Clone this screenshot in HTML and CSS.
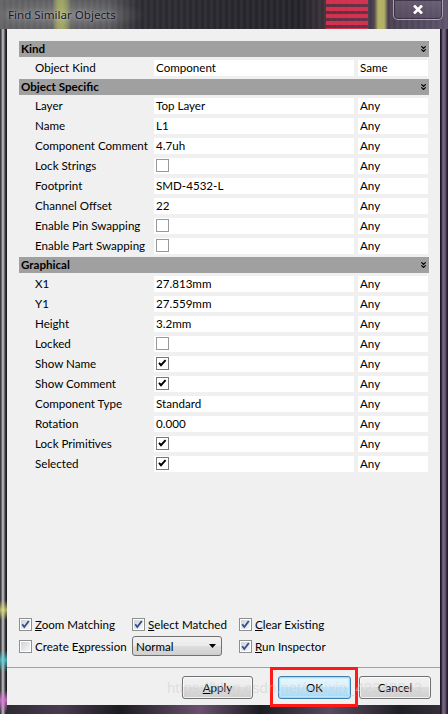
FILE: index.html
```html
<!DOCTYPE html>
<html>
<head>
<meta charset="utf-8">
<title>Find Similar Objects</title>
<link rel="stylesheet" href="styles.css">
</head>
<body>
<svg class="defs" width="0" height="0" aria-hidden="true">
  <defs>
    <linearGradient id="cbfill" x1="0" y1="0" x2="1" y2="1">
      <stop offset="0" stop-color="#cfd3d8"/>
      <stop offset="1" stop-color="#f7f7f7"/>
    </linearGradient>
  </defs>
</svg>
<div class="window">
  <div class="titlebar">
    <span class="title">Find Similar Objects</span>
    <div class="close">
      <svg width="10" height="9" viewBox="0 0 10 9"><path d="M1 0.5 L9 8.5 M9 0.5 L1 8.5" stroke="#fff" stroke-width="2.6" fill="none"/></svg>
    </div>
  </div>
  <div class="client">
    <div class="grid">
      <div class="hdr"><span>Kind</span><svg class="chev" width="5" height="6" viewBox="0 0 5 6"><path d="M0.3 0.3 L2.5 2.5 L4.7 0.3 M0.3 3.3 L2.5 5.5 L4.7 3.3" stroke="#000" stroke-width="1.2" fill="none"/></svg></div>
      <div class="row"><span class="lbl">Object Kind</span><span class="val">Component</span><span class="mode">Same</span></div>

      <div class="hdr"><span>Object Specific</span><svg class="chev" width="5" height="6" viewBox="0 0 5 6"><path d="M0.3 0.3 L2.5 2.5 L4.7 0.3 M0.3 3.3 L2.5 5.5 L4.7 3.3" stroke="#000" stroke-width="1.2" fill="none"/></svg></div>
      <div class="row"><span class="lbl">Layer</span><span class="val">Top Layer</span><span class="mode">Any</span></div>
      <div class="row"><span class="lbl">Name</span><span class="val">L1</span><span class="mode">Any</span></div>
      <div class="row"><span class="lbl">Component Comment</span><span class="val">4.7uh</span><span class="mode">Any</span></div>
      <div class="row"><span class="lbl">Lock Strings</span><span class="val"><svg class="cb" viewBox="0 0 13 13"><rect x="0.5" y="0.5" width="12" height="12" fill="#fff" stroke="#999"/></svg></span><span class="mode">Any</span></div>
      <div class="row"><span class="lbl">Footprint</span><span class="val">SMD-4532-L</span><span class="mode">Any</span></div>
      <div class="row"><span class="lbl">Channel Offset</span><span class="val">22</span><span class="mode">Any</span></div>
      <div class="row"><span class="lbl">Enable Pin Swapping</span><span class="val"><svg class="cb" viewBox="0 0 13 13"><rect x="0.5" y="0.5" width="12" height="12" fill="#fff" stroke="#999"/></svg></span><span class="mode">Any</span></div>
      <div class="row"><span class="lbl">Enable Part Swapping</span><span class="val"><svg class="cb" viewBox="0 0 13 13"><rect x="0.5" y="0.5" width="12" height="12" fill="#fff" stroke="#999"/></svg></span><span class="mode">Any</span></div>

      <div class="hdr"><span>Graphical</span><svg class="chev" width="5" height="6" viewBox="0 0 5 6"><path d="M0.3 0.3 L2.5 2.5 L4.7 0.3 M0.3 3.3 L2.5 5.5 L4.7 3.3" stroke="#000" stroke-width="1.2" fill="none"/></svg></div>
      <div class="row"><span class="lbl">X1</span><span class="val">27.813mm</span><span class="mode">Any</span></div>
      <div class="row"><span class="lbl">Y1</span><span class="val">27.559mm</span><span class="mode">Any</span></div>
      <div class="row"><span class="lbl">Height</span><span class="val">3.2mm</span><span class="mode">Any</span></div>
      <div class="row"><span class="lbl">Locked</span><span class="val"><svg class="cb" viewBox="0 0 13 13"><rect x="0.5" y="0.5" width="12" height="12" fill="#fff" stroke="#999"/></svg></span><span class="mode">Any</span></div>
      <div class="row"><span class="lbl">Show Name</span><span class="val"><svg class="cb" viewBox="0 0 13 13"><rect x="0.5" y="0.5" width="12" height="12" fill="#fff" stroke="#777"/><path d="M3 5.8 L5 8.2 L9.6 3.2" stroke="#000" stroke-width="1.9" fill="none"/></svg></span><span class="mode">Any</span></div>
      <div class="row"><span class="lbl">Show Comment</span><span class="val"><svg class="cb" viewBox="0 0 13 13"><rect x="0.5" y="0.5" width="12" height="12" fill="#fff" stroke="#777"/><path d="M3 5.8 L5 8.2 L9.6 3.2" stroke="#000" stroke-width="1.9" fill="none"/></svg></span><span class="mode">Any</span></div>
      <div class="row"><span class="lbl">Component Type</span><span class="val">Standard</span><span class="mode">Any</span></div>
      <div class="row"><span class="lbl">Rotation</span><span class="val">0.000</span><span class="mode">Any</span></div>
      <div class="row"><span class="lbl">Lock Primitives</span><span class="val"><svg class="cb" viewBox="0 0 13 13"><rect x="0.5" y="0.5" width="12" height="12" fill="#fff" stroke="#777"/><path d="M3 5.8 L5 8.2 L9.6 3.2" stroke="#000" stroke-width="1.9" fill="none"/></svg></span><span class="mode">Any</span></div>
      <div class="row"><span class="lbl">Selected</span><span class="val"><svg class="cb" viewBox="0 0 13 13"><rect x="0.5" y="0.5" width="12" height="12" fill="#fff" stroke="#777"/><path d="M3 5.8 L5 8.2 L9.6 3.2" stroke="#000" stroke-width="1.9" fill="none"/></svg></span><span class="mode">Any</span></div>
    </div>

    <div class="spacer"></div>

    <div class="options">
      <label class="opt"><svg class="wcb" viewBox="0 0 13 13"><rect x="0.5" y="0.5" width="12" height="12" fill="#fff" stroke="#8e8f8f"/><rect x="2" y="2" width="9" height="9" fill="url(#cbfill)"/><path d="M3.2 6.2 L5.3 9 L9.8 3" stroke="#34508f" stroke-width="1.9" fill="none"/></svg><span><u>Z</u>oom Matching</span></label>
      <label class="opt"><svg class="wcb" viewBox="0 0 13 13"><rect x="0.5" y="0.5" width="12" height="12" fill="#fff" stroke="#8e8f8f"/><rect x="2" y="2" width="9" height="9" fill="url(#cbfill)"/><path d="M3.2 6.2 L5.3 9 L9.8 3" stroke="#34508f" stroke-width="1.9" fill="none"/></svg><span><u>S</u>elect Matched</span></label>
      <label class="opt"><svg class="wcb" viewBox="0 0 13 13"><rect x="0.5" y="0.5" width="12" height="12" fill="#fff" stroke="#8e8f8f"/><rect x="2" y="2" width="9" height="9" fill="url(#cbfill)"/><path d="M3.2 6.2 L5.3 9 L9.8 3" stroke="#34508f" stroke-width="1.9" fill="none"/></svg><span><u>C</u>lear Existing</span></label>

      <label class="opt"><svg class="wcb" viewBox="0 0 13 13"><rect x="0.5" y="0.5" width="12" height="12" fill="#fff" stroke="#8e8f8f"/><rect x="2" y="2" width="9" height="9" fill="url(#cbfill)"/></svg><span>Create E<u>x</u>pression</span></label>
      <div class="opt"><div class="combo"><span>Normal</span><svg width="7" height="4" viewBox="0 0 7 4"><path d="M0 0 H7 L3.5 4 Z" fill="#000"/></svg></div></div>
      <label class="opt"><svg class="wcb" viewBox="0 0 13 13"><rect x="0.5" y="0.5" width="12" height="12" fill="#fff" stroke="#8e8f8f"/><rect x="2" y="2" width="9" height="9" fill="url(#cbfill)"/><path d="M3.2 6.2 L5.3 9 L9.8 3" stroke="#34508f" stroke-width="1.9" fill="none"/></svg><span><u>R</u>un Inspector</span></label>
    </div>

    <div class="sep"></div>

    <div class="buttons">
      <button class="btn apply"><u>A</u>pply</button>
      <button class="btn ok">OK</button>
      <button class="btn cancel">Cancel</button>
    </div>
  </div>
</div>
<div class="highlight"></div>
<div class="watermark">https://blog.csdn.net/weixin_42343843</div>
</body>
</html>
```

FILE: styles.css
```css
html, body {
  margin: 0;
  padding: 0;
}

body {
  width: 448px;
  height: 714px;
  overflow: hidden;
  position: relative;
  font-family: Lato, "Noto Sans", sans-serif;
  font-size: 11.6px;
  color: #000;
  background: #2a2a30;
}

.defs {
  position: absolute;
}

* {
  box-sizing: border-box;
}

.window {
  height: 714px;
  display: flex;
  flex-direction: column;
  background:
    linear-gradient(to bottom, transparent 600px, rgba(230, 230, 120, 0.7) 610px, transparent 620px, transparent 650px, rgba(80, 220, 230, 0.7) 660px, transparent 672px, transparent 690px, rgba(220, 120, 220, 0.8) 700px, transparent 714px) 0 0 / 7px 714px no-repeat,
    linear-gradient(to right, #3c3c3e 0, #3c3c3e 1px, #9a9a9c 2px, #c4c4c6 3px, #8a8a8c 4px, #4a4a4c 5px, #1e1e20 6px, #1e1e20 7px) 0 0 / 7px 714px no-repeat,
    linear-gradient(to right, #1c1a20 0, #1c1a20 1px, #4e4060 2px, #7a6a84 3px, #6a5a76 5px, #2a2430 7px, #1a1a1a 8px) 440px 0 / 8px 714px no-repeat,
    linear-gradient(to right, #2a2a2e 0, #4a3a50 60px, #1c1c20 120px, #6a5070 200px, #1c1c20 260px, #5a4a62 330px, #202024 400px, #3a3040 448px) 0 705px / 448px 9px no-repeat,
    #2a2a30;
}

.titlebar {
  height: 29px;
  flex: none;
  display: flex;
  align-items: flex-start;
  padding-left: 8px;
  background:
    linear-gradient(to right, transparent 52px, rgba(205, 215, 100, 0.55) 58px, rgba(205, 215, 100, 0.55) 64px, transparent 72px),
    linear-gradient(to right, transparent 374px, rgba(215, 215, 110, 0.75) 378px, rgba(215, 215, 110, 0.75) 384px, transparent 388px),
    repeating-linear-gradient(to bottom, rgba(225, 50, 80, 0.9) 0 4px, rgba(130, 40, 70, 0.55) 4px 7px) 326px 0 / 42px 29px no-repeat,
    radial-gradient(ellipse 80px 16px at 66px 15px, rgba(150, 150, 150, 0.55), transparent),
    repeating-linear-gradient(to right, rgba(255, 255, 255, 0.04) 0 3px, transparent 3px 6px),
    linear-gradient(to right, #626265 0, #56565a 110px, #2c2c32 140px, #232329 300px, #3a3038 322px, #4a4052 392px, #5c526a 448px);
}

.title {
  margin-top: 7px;
  font-family: "Noto Sans", sans-serif;
  font-size: 11.6px;
  color: #16162a;
  text-shadow: 0 0 6px rgba(255, 255, 255, 0.45), 0 0 2px rgba(255, 255, 255, 0.35);
}

.close {
  margin-left: auto;
  margin-right: 5px;
  width: 50px;
  height: 20px;
  border: 1px solid rgba(220, 215, 230, 0.6);
  border-top: none;
  border-radius: 0 0 5px 5px;
  background: linear-gradient(to bottom, rgba(120, 110, 130, 0.55), rgba(90, 80, 100, 0.55));
  box-shadow: inset 0 0 0 1px rgba(40, 30, 50, 0.6);
  display: flex;
  align-items: center;
  justify-content: center;
}

.client {
  flex: 1;
  margin: 0 8px 9px 7px;
  background: #f0f0f0;
  display: flex;
  flex-direction: column;
}

.grid {
  padding: 11px 0 0 12px;
  width: 422px;
}

.hdr {
  height: 16px;
  width: 410px;
  margin: 1px 0;
  background: #a0a0a0;
  display: flex;
  align-items: center;
  justify-content: space-between;
  padding: 0 3px 0 2px;
  font-weight: bold;
  line-height: 16px;
}

.chev {
  display: block;
}

.row {
  height: 20px;
  display: grid;
  grid-template-columns: 135px 200px 74px;
  align-items: center;
}

.lbl {
  padding-left: 16px;
  white-space: nowrap;
  line-height: 16px;
}

.val, .mode {
  height: 16px;
  background: #fff;
  padding-left: 2px;
  line-height: 16px;
  white-space: nowrap;
}

.mode {
  margin-left: 4px;
}

.cb {
  display: block;
  width: 13px;
  height: 13px;
  margin-top: 1px;
}

.spacer {
  flex: 1;
}

.options {
  display: grid;
  grid-template-columns: 113px 107px auto;
  row-gap: 2px;
  padding-left: 12px;
  margin-bottom: 11px;
}

.opt {
  height: 20px;
  display: flex;
  align-items: center;
  gap: 3px;
  white-space: nowrap;
}

.wcb {
  display: block;
  width: 13px;
  height: 13px;
  flex: none;
}

.combo {
  width: 90px;
  height: 20px;
  border: 1px solid #707070;
  border-radius: 3px;
  background: linear-gradient(to bottom, #f2f2f2 0, #ebebeb 50%, #dddddd 50%, #cfcfcf 100%);
  display: flex;
  align-items: center;
  justify-content: space-between;
  padding: 0 5px 0 3px;
}

.sep {
  height: 0;
  border-top: 1px solid #a0a0a0;
}

.buttons {
  height: 37px;
  display: flex;
  align-items: flex-start;
  padding: 8px 0 0 175px;
}

.btn {
  height: 23px;
  font-family: inherit;
  font-size: 11.6px;
  color: #000;
  border: 1px solid #707070;
  border-radius: 3px;
  background: linear-gradient(to bottom, #f2f2f2 0, #ebebeb 50%, #dddddd 50%, #cfcfcf 100%);
  box-shadow: inset 0 0 0 1px rgba(255, 255, 255, 0.7);
  padding: 0;
  line-height: 20px;
}

.apply {
  width: 71px;
}

.ok {
  width: 73px;
  margin-left: 25px;
  border-color: #3c7fb1;
  box-shadow: inset 0 0 0 1px #9fdcf6, inset 0 0 0 2px rgba(200, 235, 250, 0.6);
  background: linear-gradient(to bottom, #eaf6fd 0, #d9f0fc 50%, #bee6fd 50%, #a7d9f5 100%);
}

.cancel {
  width: 72px;
  margin-left: 8px;
}

.highlight {
  position: absolute;
  left: 270px;
  top: 667px;
  width: 88px;
  height: 40px;
  border: 3px solid #ff1a1a;
}

.watermark {
  position: absolute;
  left: 167px;
  top: 679px;
  font-family: "Liberation Sans", sans-serif;
  font-size: 15px;
  color: rgba(205, 205, 210, 0.5);
  white-space: nowrap;
  pointer-events: none;
}
```
